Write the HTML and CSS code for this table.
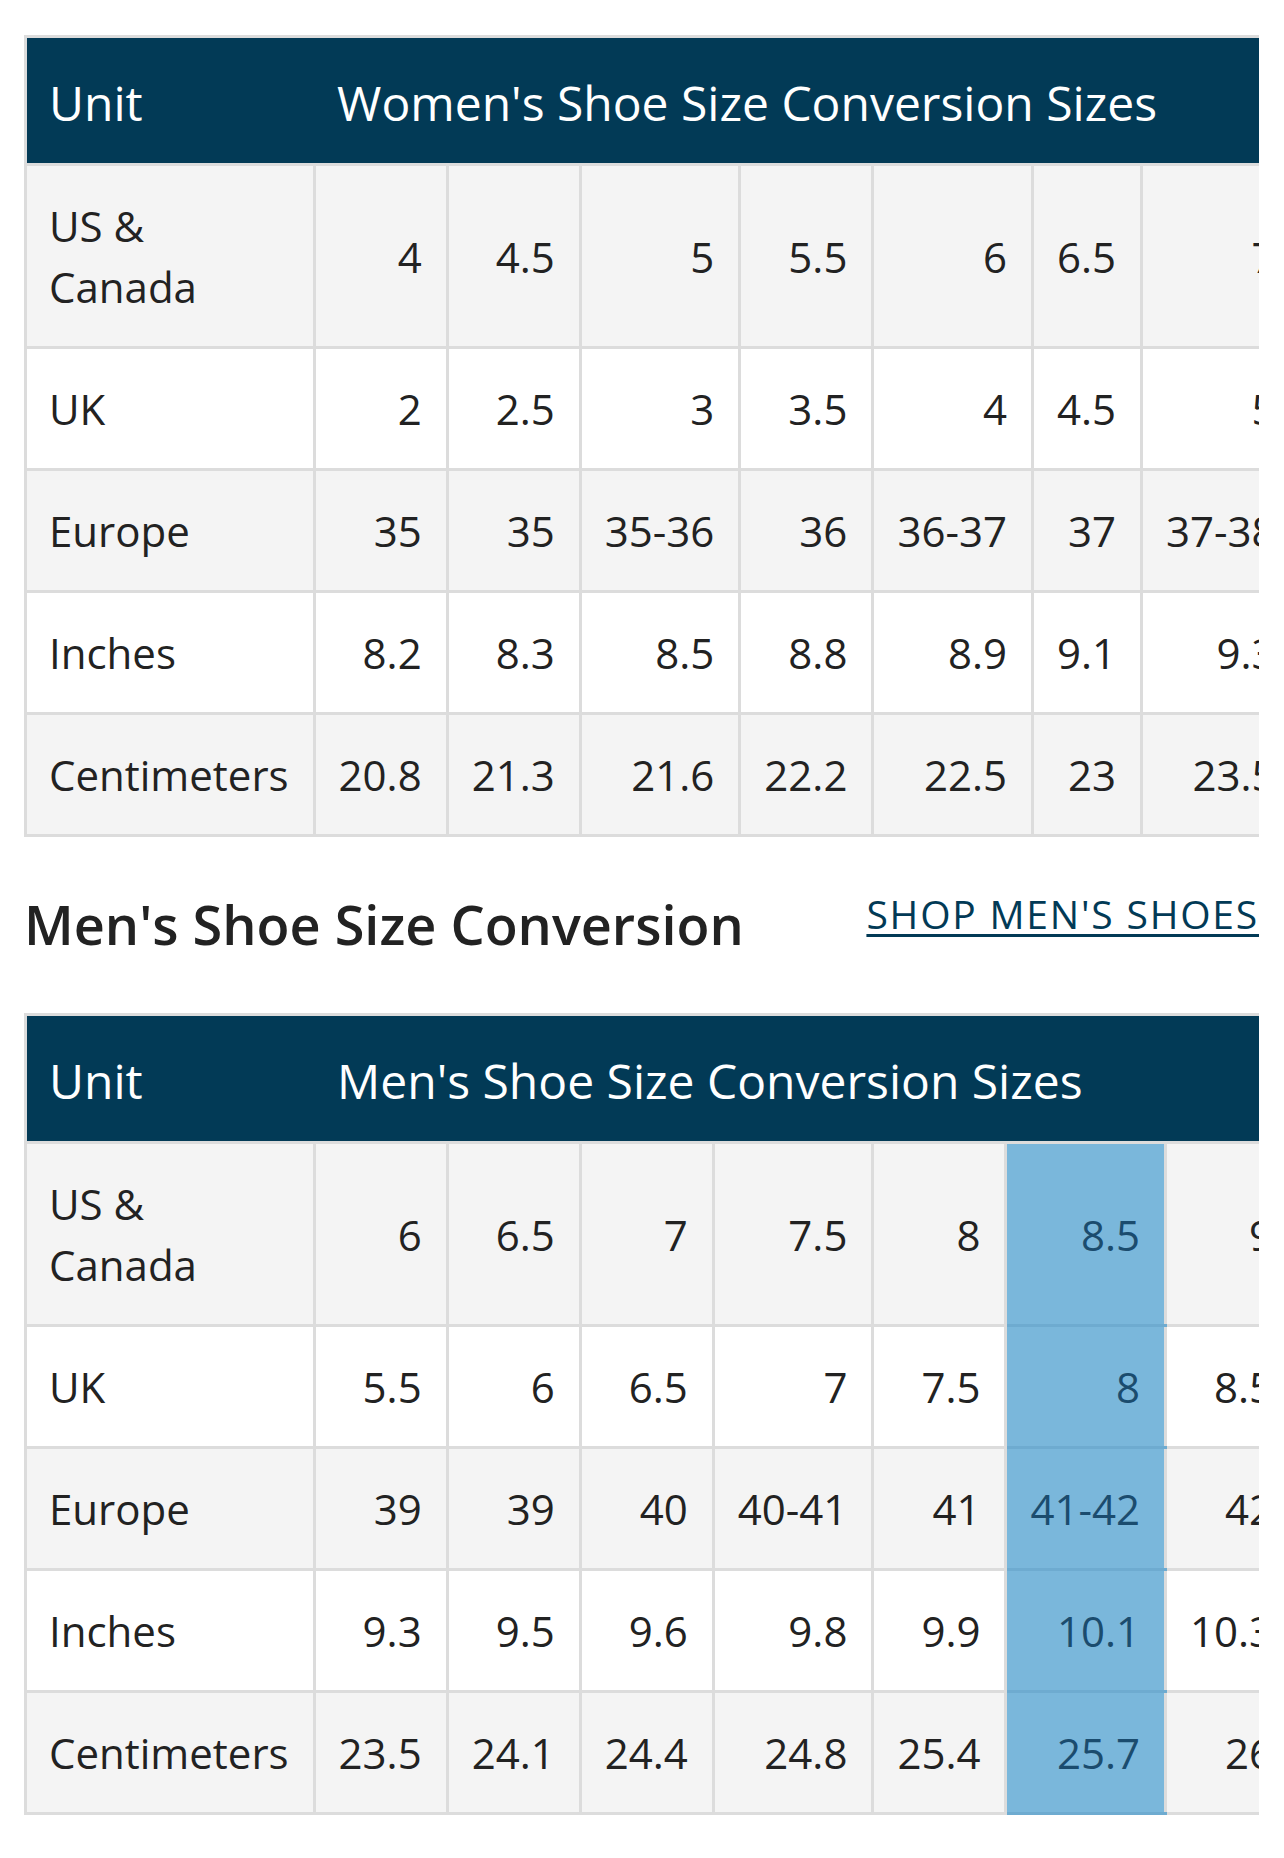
FILE: index.html
```html
<!DOCTYPE html>
<html lang="en">
<head>
<meta charset="utf-8">
<title>Shoe Size Conversion</title>
<link rel="stylesheet" href="styles.css">
</head>
<body>
<main class="page">
  <div class="table-scroll">
    <table class="size-table">
      <thead>
        <tr>
          <th class="head-unit">Unit</th>
          <th class="head-title" colspan="17">Women's Shoe Size Conversion Sizes</th>
        </tr>
      </thead>
      <tbody>
        <tr>
          <th class="label">US &amp; Canada</th>
          <td>4</td><td>4.5</td><td>5</td><td>5.5</td><td>6</td><td>6.5</td><td>7</td><td>7.5</td><td>8</td><td>8.5</td><td>9</td><td>9.5</td><td>10</td><td>10.5</td><td>11</td><td>11.5</td><td>12</td>
        </tr>
        <tr>
          <th class="label">UK</th>
          <td>2</td><td>2.5</td><td>3</td><td>3.5</td><td>4</td><td>4.5</td><td>5</td><td>5.5</td><td>6</td><td>6.5</td><td>7</td><td>7.5</td><td>8</td><td>8.5</td><td>9</td><td>9.5</td><td>10</td>
        </tr>
        <tr>
          <th class="label">Europe</th>
          <td>35</td><td>35</td><td>35-36</td><td>36</td><td>36-37</td><td>37</td><td>37-38</td><td>38</td><td>38-39</td><td>39</td><td>39-40</td><td>40</td><td>40-41</td><td>41</td><td>41-42</td><td>42</td><td>42-43</td>
        </tr>
        <tr>
          <th class="label">Inches</th>
          <td>8.2</td><td>8.3</td><td>8.5</td><td>8.8</td><td>8.9</td><td>9.1</td><td>9.3</td><td>9.4</td><td>9.5</td><td>9.7</td><td>9.9</td><td>10</td><td>10.2</td><td>10.3</td><td>10.5</td><td>10.7</td><td>10.9</td>
        </tr>
        <tr>
          <th class="label">Centimeters</th>
          <td>20.8</td><td>21.3</td><td>21.6</td><td>22.2</td><td>22.5</td><td>23</td><td>23.5</td><td>23.8</td><td>24.1</td><td>24.6</td><td>25.1</td><td>25.4</td><td>25.9</td><td>26.2</td><td>26.7</td><td>27.1</td><td>27.6</td>
        </tr>
      </tbody>
    </table>
  </div>

  <div class="section-head">
    <h2 class="section-title">Men's Shoe Size Conversion</h2>
    <a class="shop-link" href="#">SHOP MEN'S SHOES</a>
  </div>

  <div class="table-scroll">
    <table class="size-table">
      <thead>
        <tr>
          <th class="head-unit">Unit</th>
          <th class="head-title" colspan="17">Men's Shoe Size Conversion Sizes</th>
        </tr>
      </thead>
      <tbody>
        <tr>
          <th class="label">US &amp; Canada</th>
          <td>6</td><td>6.5</td><td>7</td><td>7.5</td><td>8</td><td class="hl">8.5</td><td>9</td><td>9.5</td><td>10</td><td>10.5</td><td>11</td><td>11.5</td><td>12</td><td>13</td><td>14</td><td>15</td><td>16</td>
        </tr>
        <tr>
          <th class="label">UK</th>
          <td>5.5</td><td>6</td><td>6.5</td><td>7</td><td>7.5</td><td class="hl">8</td><td>8.5</td><td>9</td><td>9.5</td><td>10</td><td>10.5</td><td>11</td><td>11.5</td><td>12.5</td><td>13.5</td><td>14.5</td><td>15.5</td>
        </tr>
        <tr>
          <th class="label">Europe</th>
          <td>39</td><td>39</td><td>40</td><td>40-41</td><td>41</td><td class="hl">41-42</td><td>42</td><td>42-43</td><td>43</td><td>43-44</td><td>44</td><td>44-45</td><td>45</td><td>46</td><td>47</td><td>48</td><td>49</td>
        </tr>
        <tr>
          <th class="label">Inches</th>
          <td>9.3</td><td>9.5</td><td>9.6</td><td>9.8</td><td>9.9</td><td class="hl">10.1</td><td>10.3</td><td>10.4</td><td>10.6</td><td>10.8</td><td>10.9</td><td>11.1</td><td>11.3</td><td>11.6</td><td>11.9</td><td>12.2</td><td>12.5</td>
        </tr>
        <tr>
          <th class="label">Centimeters</th>
          <td>23.5</td><td>24.1</td><td>24.4</td><td>24.8</td><td>25.4</td><td class="hl">25.7</td><td>26</td><td>26.7</td><td>27</td><td>27.3</td><td>27.9</td><td>28.3</td><td>28.6</td><td>29.4</td><td>30.2</td><td>31</td><td>31.8</td>
        </tr>
      </tbody>
    </table>
  </div>
</main>
</body>
</html>
```
FILE: styles.css
```css
html, body {
  margin: 0;
  padding: 0;
  background: #ffffff;
}

body {
  font-family: "Open Sans", "Noto Sans", "DejaVu Sans", sans-serif;
  color: #222222;
}

.page {
  padding: 35px 25px 40px 24px;
}

.table-scroll {
  overflow: hidden;
}

.size-table {
  border-collapse: collapse;
  border: 3px solid #dcdcdc;
  font-size: 42px;
  line-height: 61px;
}

.size-table th,
.size-table td {
  border: 3px solid #dcdcdc;
  padding: 29px 24px 29px 23px;
  font-weight: 400;
  vertical-align: middle;
}

.size-table td {
  text-align: right;
  white-space: nowrap;
}

.size-table thead th {
  background: #023a56;
  color: #ffffff;
  font-size: 48px;
  line-height: 66px;
  padding: 32px 24px 27px 23px;
  text-align: left;
  white-space: nowrap;
}

.size-table thead th.head-unit {
  padding-left: 22px;
  border-right: none;
}

.size-table thead th.head-title {
  border-left: none;
}

.size-table th.label {
  text-align: left;
  padding-left: 22px;
}

.size-table tbody tr:nth-child(odd) {
  background: #f4f4f4;
}

.size-table tbody tr:nth-child(even) {
  background: #ffffff;
}

.size-table td.hl {
  background: #7ab7db;
  color: #1b4c6e;
  border-bottom-color: #6eabd0;
}

.section-head {
  display: flex;
  justify-content: space-between;
  align-items: flex-start;
  margin: 52px 0 54px;
}

.section-title {
  margin: 0;
  font-size: 54px;
  line-height: 70px;
  font-weight: 600;
  color: #222222;
}

.shop-link {
  margin-top: -1px;
  font-size: 39px;
  line-height: 51px;
  letter-spacing: 1.8px;
  color: #023a56;
  text-decoration: underline;
  text-decoration-thickness: 3px;
  text-underline-offset: 5px;
}
```
